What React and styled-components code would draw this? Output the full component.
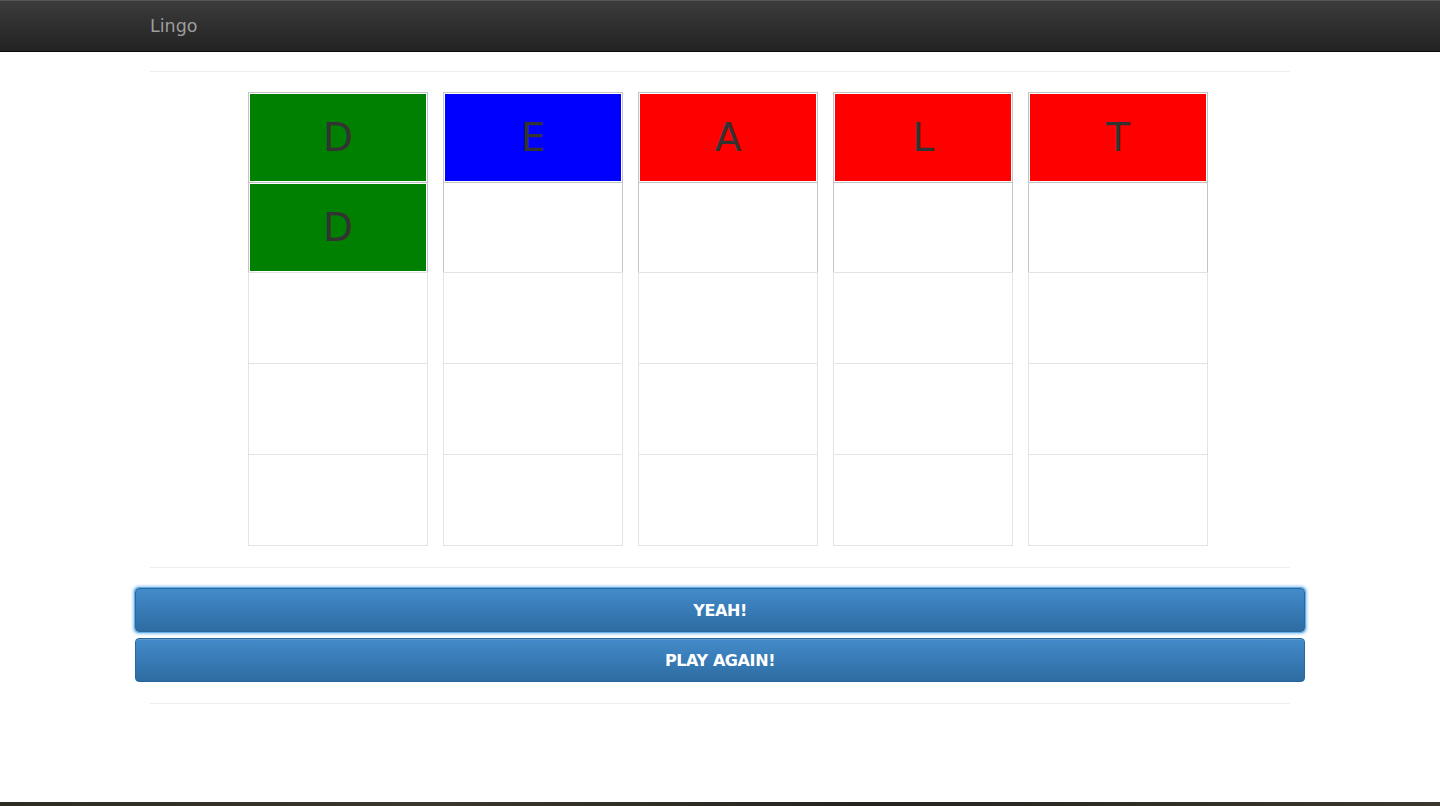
import React from 'react';
import styled, { createGlobalStyle } from 'styled-components';

const GlobalStyle = createGlobalStyle`
    html, body {
        margin: 0;
        padding: 0;
        background: #fff;
    }
    body {
        font-family: "DejaVu Sans", "Liberation Sans", sans-serif;
        color: #333;
    }
`

const Page = styled.div`
    min-height: 100vh;
    display: flex;
    flex-direction: column;
`
const Navbar = styled.nav`
    border-top: 1px solid #555;
    border-bottom: 1px solid #080808;
    background: linear-gradient(to bottom, #3c3c3c 0%, #222 100%);
    box-sizing: border-box;
    height: 52px;
`
const NavInner = styled.div`
    width: 1140px;
    margin: 0 auto;
    height: 100%;
    display: flex;
    align-items: center;
`
const Brand = styled.span`
    font-size: 17.5px;
    color: #9d9d9d;
    line-height: 1;
    margin-top: 1px;
`
const Container = styled.div`
    width: 1140px;
    margin: 0 auto;
    display: flex;
    flex-direction: column;
`
const Rule = styled.hr`
    border: 0;
    border-top: 1px solid #eee;
    margin: ${p => p.$top}px 0 ${p => p.$bottom}px;
    width: 100%;
`
const Board = styled.div`
    display: flex;
    gap: 15px;
    margin-left: 98px;
`
const Column = styled.div`
    display: flex;
    flex-direction: column;
    width: 180px;
`
const Cell = styled.div`
    box-sizing: border-box;
    height: ${p => p.$h}px;
    border: 1px solid ${p => (p.$active ? '#c4c4c4' : '#e3e3e3')};
    margin-top: -1px;
    padding: 1px;
    background: #fff;
    &:first-child {
        margin-top: 0;
    }
`
const Fill = styled.div`
    height: 100%;
    background: ${p => p.$color || '#fff'};
    display: flex;
    align-items: center;
    justify-content: center;
    font-size: 39px;
    color: #333;
    line-height: 1;
`
const Actions = styled.div`
    display: flex;
    flex-direction: column;
    gap: 6px;
    margin: 0 -15px;
`
const Button = styled.button`
    height: 44px;
    border: 1px solid #2b669a;
    border-radius: 4px;
    background: linear-gradient(to bottom, #428bca 0%, #2d6ca2 100%);
    color: #fff;
    font-family: "DejaVu Sans", "Liberation Sans", sans-serif;
    font-weight: bold;
    font-size: 16px;
    letter-spacing: -0.4px;
    cursor: pointer;
    box-shadow: ${p => (p.$focus ? '0 0 0 1px #66afe9, 0 0 3px 2px rgba(102,175,233,0.7)' : 'inset 0 1px 0 rgba(255,255,255,0.15)')};
    outline: none;
`
const Spacer = styled.div`
    flex: 1;
`
const Desk = styled.div`
    height: 4px;
    background: linear-gradient(to right, #2e2b25, #3a362e 30%, #26231f 60%, #3b372f);
`

const colors = { g: '#008000', b: '#0000ff', r: '#ff0000' };

const rows = [
    [['D', 'g'], ['E', 'b'], ['A', 'r'], ['L', 'r'], ['T', 'r']],
    [['D', 'g'], ['', ''], ['', ''], ['', ''], ['', '']],
    [['', ''], ['', ''], ['', ''], ['', ''], ['', '']],
    [['', ''], ['', ''], ['', ''], ['', ''], ['', '']],
    [['', ''], ['', ''], ['', ''], ['', ''], ['', '']],
];
const heights = [91, 91, 92, 92, 92];

const App = () => {
    return (
        <Page>
            <GlobalStyle />
            <Navbar>
                <NavInner>
                    <Brand>Lingo</Brand>
                </NavInner>
            </Navbar>
            <Container>
                <Rule $top={19} $bottom={20} />
                <Board>
                    {[0, 1, 2, 3, 4].map(col => (
                        <Column key={col}>
                            {rows.map((row, r) => (
                                <Cell key={r} $h={heights[r]} $active={r < 2}>
                                    <Fill $color={colors[row[col][1]]}>{row[col][0]}</Fill>
                                </Cell>
                            ))}
                        </Column>
                    ))}
                </Board>
                <Rule $top={21} $bottom={20} />
                <Actions>
                    <Button $focus>YEAH!</Button>
                    <Button>PLAY AGAIN!</Button>
                </Actions>
                <Rule $top={21} $bottom={0} />
            </Container>
            <Spacer />
            <Desk />
        </Page>
    )
}

export default App;
